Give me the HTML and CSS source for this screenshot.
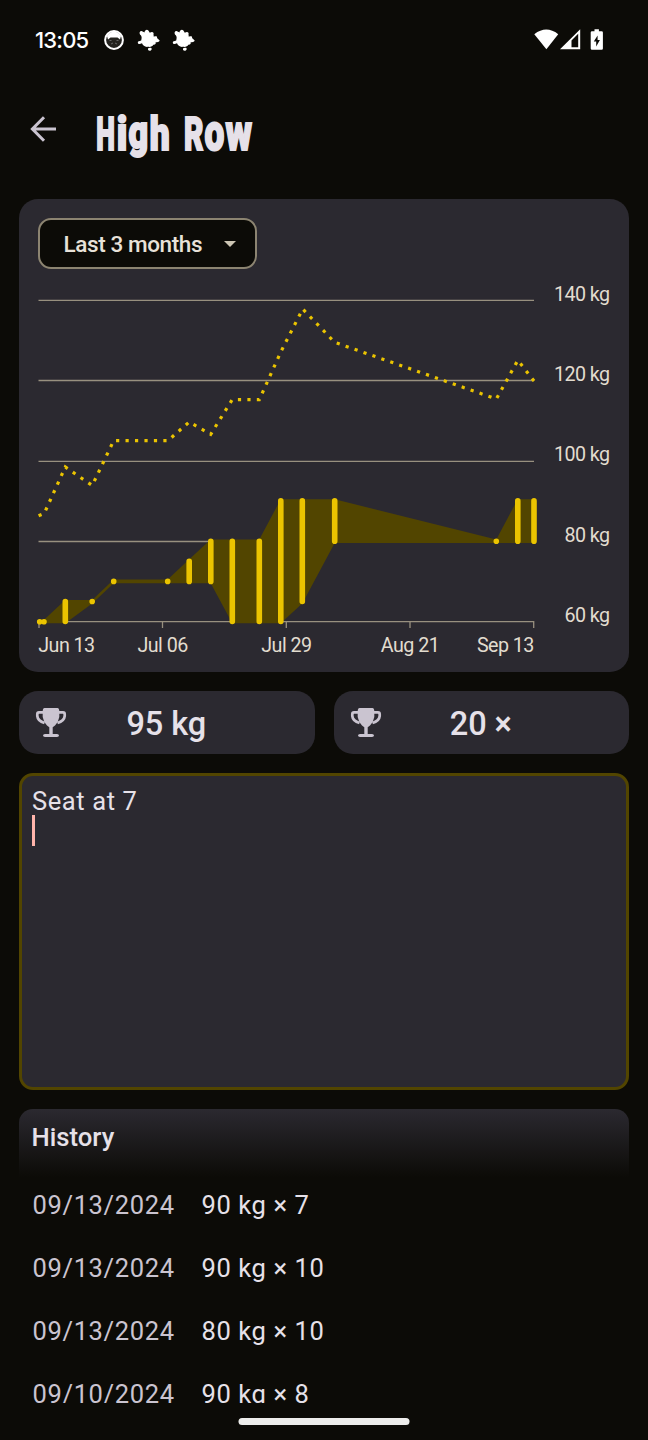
FILE: index.html
```html
<!DOCTYPE html>
<html lang="en">
<head>
<meta charset="utf-8">
<title>High Row</title>
<link rel="stylesheet" href="styles.css">
</head>
<body>
<div class="screen">
  <header class="status">
    <div class="status-left">
      <span class="clock">13:05</span>
      <svg class="cat" width="20" height="20" viewBox="0 0 20 20"><circle cx="10" cy="10" r="8.900" fill="#24231f" stroke="#fff" stroke-width="2"/><path d="M3 6Q6 1.500 10 1.500T17 6L16 9.500 13.500 7.500H6.500L4 9.500Z" fill="#fff"/><path d="M5.500 10.500h2M12.500 10.500h2M7 14l2-1M13 14l-2-1" stroke="#777" stroke-width=".8"/></svg>
      <svg class="leaf" width="23" height="23" viewBox="0 0 23 23"><use href="#splat"/></svg>
      <svg class="leaf" width="23" height="23" viewBox="0 0 23 23"><path id="splat" fill="#fff" d="M3.200 2.400C5 1.200 6.200 3.200 7.400 3.400C8 1 10 0 11.400 1.600L12.800 3.800C15 2 17.300 3 16.500 5.600L16.800 7.700C19 7 20.600 7.300 20 9L22.700 11.600C22.300 13.400 20 13.200 18.600 13.300C19.200 15 18 16 16.300 15.800C15.500 17.500 13.300 18.300 11 17.800C8 18.300 6 16.500 5 14.300C2.800 15.500 1 15.300.8 13.700C.6 12 2.300 12.300 4.200 11.500C4.700 9 5 8.200 4 6.500C2.300 5 2.200 3.200 3.200 2.400ZM11 19.500C12 18.400 15 18.600 14.700 20C14.600 22 11.700 22.300 11 20.800Z"/></svg>
    </div>
    <svg width="70" height="22" viewBox="0 0 70 22" fill="#fff"><path d="M.3 5.200Q12.300-4 24.200 5.200L12.400 20.300Z"/><path fill-rule="evenodd" d="M26 20.200 46.200.2V20.200ZM37.500 11.400V18.200H44.200V4.800Z"/><path fill-rule="evenodd" d="M60.500.2h4.400v2h2.700q1.300 0 1.300 1.300V19.400q0 1.300-1.300 1.300H58q-1.300 0-1.300-1.300V3.500q0-1.300 1.300-1.300h2.500ZM63.600 6.500 59.800 12.400H62.200V17.500L65.900 11H63.600Z"/></svg>
  </header>

  <div class="topbar">
    <svg class="back" width="27" height="26" viewBox="0 0 27 26" fill="none" stroke="#cac4d0" stroke-width="3"><path d="M26 13H2.500M14 1.300 2.400 13 14 24.700"/></svg>
    <svg class="title" width="160" height="50" viewBox="0 0 160 50" role="heading" aria-label="High Row">
      <text y="39.800"><tspan x=".2" textLength="18.600" lengthAdjust="spacingAndGlyphs">H</tspan><tspan x="20.800" textLength="10.600" lengthAdjust="spacingAndGlyphs">i</tspan><tspan class="bowl" x="32.600" y="37.500" textLength="19.600" lengthAdjust="spacingAndGlyphs">g</tspan><tspan x="53.800" y="39.800" textLength="20" lengthAdjust="spacingAndGlyphs">h</tspan></text>
      <text y="39.800"><tspan x="88" textLength="19.500" lengthAdjust="spacingAndGlyphs">R</tspan><tspan class="tall" x="108.600" textLength="19.800" lengthAdjust="spacingAndGlyphs">o</tspan><tspan class="tall" x="129.500" textLength="26.500" lengthAdjust="spacingAndGlyphs">w</tspan></text>
    </svg>
  </div>

  <main class="content">
    <section class="card chart-card">
      <button class="range"><span>Last 3 months</span><svg width="12" height="6" viewBox="0 0 12 6"><path d="M0 0H12L6 6Z" fill="#cdc6b4"/></svg></button>
      <svg class="chart" width="572" height="380" viewBox="38 280 572 380">
        <g class="grid"><path d="M38.500 300.300H534M38.500 380.500H534M38.500 461.300H534M38.500 541.500H534M38.500 621.600H534"/><path d="M39 621v7M162.500 621v7M286.300 621v7M410 621v7M533.700 621v7"/></g>
        <path class="band" d="M39 620 44 619.700 65.300 600H92.200L113.700 579.600H167.700L189 559.500 210.700 539.600H259.300L280.700 499.300H334.700L496.300 539.500 517.700 499.300H534V543H334.700L302.300 603.400 280.700 623.300H232.300L210.700 583.300H113.700L92.200 603.400 65.300 623.300H39Z"/>
        <path class="bars" d="M39.700 621.700v.01M44 621.700v.01M65.300 601.500V621.500M92.200 601.500v.01M113.700 581.400v.01M167.700 581.400v.01M189.200 561.300V581.400M210.800 541.200V581.400M232.300 541.200V621.500M259.300 541.200V621.500M280.800 500.900V621.500M302.300 500.900V601.500M334.700 500.900V541.300M496.300 541.300v.01M517.800 500.900V541.300M534 500.900V541.300"/>
        <path class="trend" d="M38.600 515.800 44.200 513.500 65.300 467 92.200 485.500 113.700 440.600H168L189.200 422 210.700 434.300 232.200 399.700H259.300L281 351.500 302.700 309 334.700 342.300 496.300 399 517.800 360.300 534 381"/>
        <g class="label end"><text x="609.600" y="301">140 kg</text><text x="609.600" y="381">120 kg</text><text x="609.600" y="461.300">100 kg</text><text x="609.600" y="541.500">80 kg</text><text x="609.600" y="621.700">60 kg</text></g>
        <g class="label"><text x="38.300" y="651.700">Jun 13</text><text class="mid" x="162.600" y="651.700">Jul 06</text><text class="mid" x="286.400" y="651.700">Jul 29</text><text class="mid" x="410" y="651.700">Aug 21</text><text class="last" x="533.900" y="651.700">Sep 13</text></g>
      </svg>
    </section>

    <section class="records">
      <div class="card record"><svg width="30" height="30" viewBox="0 0 30 30"><g id="cup"><path fill="#cac4d0" d="M9.500 0H22.500Q24.300.200 24.300 3.500V9Q23.500 14 20 17.500L17.700 19.300V26H22Q24 26.200 24 27.500T22 29H10Q8 28.800 8 27.500T10 26H14.300V19.300L12 17.500Q8.500 14 7.700 9V3.500Q7.700.200 9.500 0Z"/><path fill="none" stroke="#cac4d0" stroke-width="2.700" stroke-linejoin="round" d="M8.500 4.400H4Q2.300 4.400 2.300 6.200V8Q2.800 13 9.500 15M23.500 4.400H28Q29.700 4.400 29.700 6.200V8Q29.200 13 22.500 15"/></g></svg><span>95 kg</span></div>
      <div class="card record"><svg width="30" height="30" viewBox="0 0 30 30"><use href="#cup"/></svg><span>20 ×</span></div>
    </section>

    <section class="notes"><div>Seat at 7</div><div class="caret"></div></section>

    <section class="history">
      <h2>History</h2>
      <div class="rows">
        <div class="row"><span class="date">09/13/2024</span><span>90 kg × 7</span></div>
        <div class="row"><span class="date">09/13/2024</span><span>90 kg × 10</span></div>
        <div class="row"><span class="date">09/13/2024</span><span>80 kg × 10</span></div>
        <div class="row"><span class="date">09/10/2024</span><span>90 kg × 8</span></div>
      </div>
    </section>
  </main>
  <div class="home"></div>
</div>
</body>
</html>
```
FILE: styles.css
```css
* { box-sizing: border-box; }
body { margin: 0; background: #0c0b07; color: #e6e1e9; font-family: Roboto, sans-serif; }
svg { display: block; flex: none; overflow: visible; }
.screen { width: 648px; height: 1440px; overflow: hidden; display: flex; flex-direction: column; background: #0c0b07; }
.status { height: 80px; padding: 0 44px 0 35px; display: flex; align-items: center; justify-content: space-between; }
.status-left { display: flex; align-items: center; }
.clock { width: 69px; font: 500 22px/26px Inter, sans-serif; letter-spacing: -.8px; color: #fff; }
.leaf { margin-left: 13px; }
.leaf + .leaf { margin-left: 12px; }
.topbar { height: 119px; padding: 30px 0 0 30px; display: flex; align-items: flex-start; }
.back { margin-top: 6px; }
.title { margin-left: 39px; fill: #e6e1e9; stroke: #e6e1e9; stroke-width: 2px; font-family: Roboto, sans-serif; font-weight: 900; font-size: 47px; }
.tall { font-size: 52px; }
.bowl { font-size: 47px; }
.content { padding: 0 19px; display: flex; flex-direction: column; }
.card { background: #2b2930; border-radius: 19px; }
.chart-card { height: 473px; padding: 19px; }
.range { width: 219px; height: 51px; padding: 0 19px 0 23.500px; display: flex; align-items: center; justify-content: space-between; border: 2px solid #8c8471; border-radius: 13px; background: #0c0b07; color: #e8e2d9; font: 500 22.500px/28px Roboto, sans-serif; letter-spacing: -.4px; }
.chart { margin-top: 11px; }
.grid { fill: none; stroke: #98907f; stroke-width: 1.300px; }
.band { fill: #524500; }
.bars { fill: none; stroke: #ebc400; stroke-width: 5.600px; stroke-linecap: round; }
.trend { fill: none; stroke: #ebc400; stroke-width: 3.200px; stroke-dasharray: 3.200 6.260; }
.label { fill: #e2dccf; font-size: 19.700px; letter-spacing: -.55px; }
.end, .last { text-anchor: end; }
.mid { text-anchor: middle; }
.records { display: grid; grid-template-columns: 1fr 1fr; gap: 19px; margin-top: 19px; }
.record { height: 63px; padding: 0 16px; display: flex; align-items: center; font-weight: 500; font-size: 32.500px; letter-spacing: -.1px; }
.record span { flex: 1; text-align: center; margin-right: 31px; padding-top: 2px; }
.notes { height: 317px; margin-top: 19px; padding: 9px 10px; border: 3px solid #524500; border-radius: 14px; background: #2b2930; font-size: 25.500px; line-height: 32px; letter-spacing: .6px; }
.caret { width: 3.500px; height: 31px; margin: -2px 0 0 -.5px; background: #ffb4ab; }
.history { margin-top: 19px; border-radius: 14px 14px 0 0; background: linear-gradient(#2b2930, #0c0b07) top / 100% 68px no-repeat; }
.history h2 { margin: 0; height: 64px; padding: 12px 12.500px; font-weight: 500; font-size: 25.700px; line-height: 32px; }
.rows { height: 230px; overflow: hidden; }
.row { height: 63px; display: flex; align-items: center; padding-left: 13.500px; font-size: 25.500px; letter-spacing: .6px; }
.date { width: 169px; color: #cac4d0; letter-spacing: .65px; }
.home { width: 171px; height: 7px; margin: 15px auto 0; border-radius: 4px; background: #ededeb; transform: translateX(-.5px); }
```
